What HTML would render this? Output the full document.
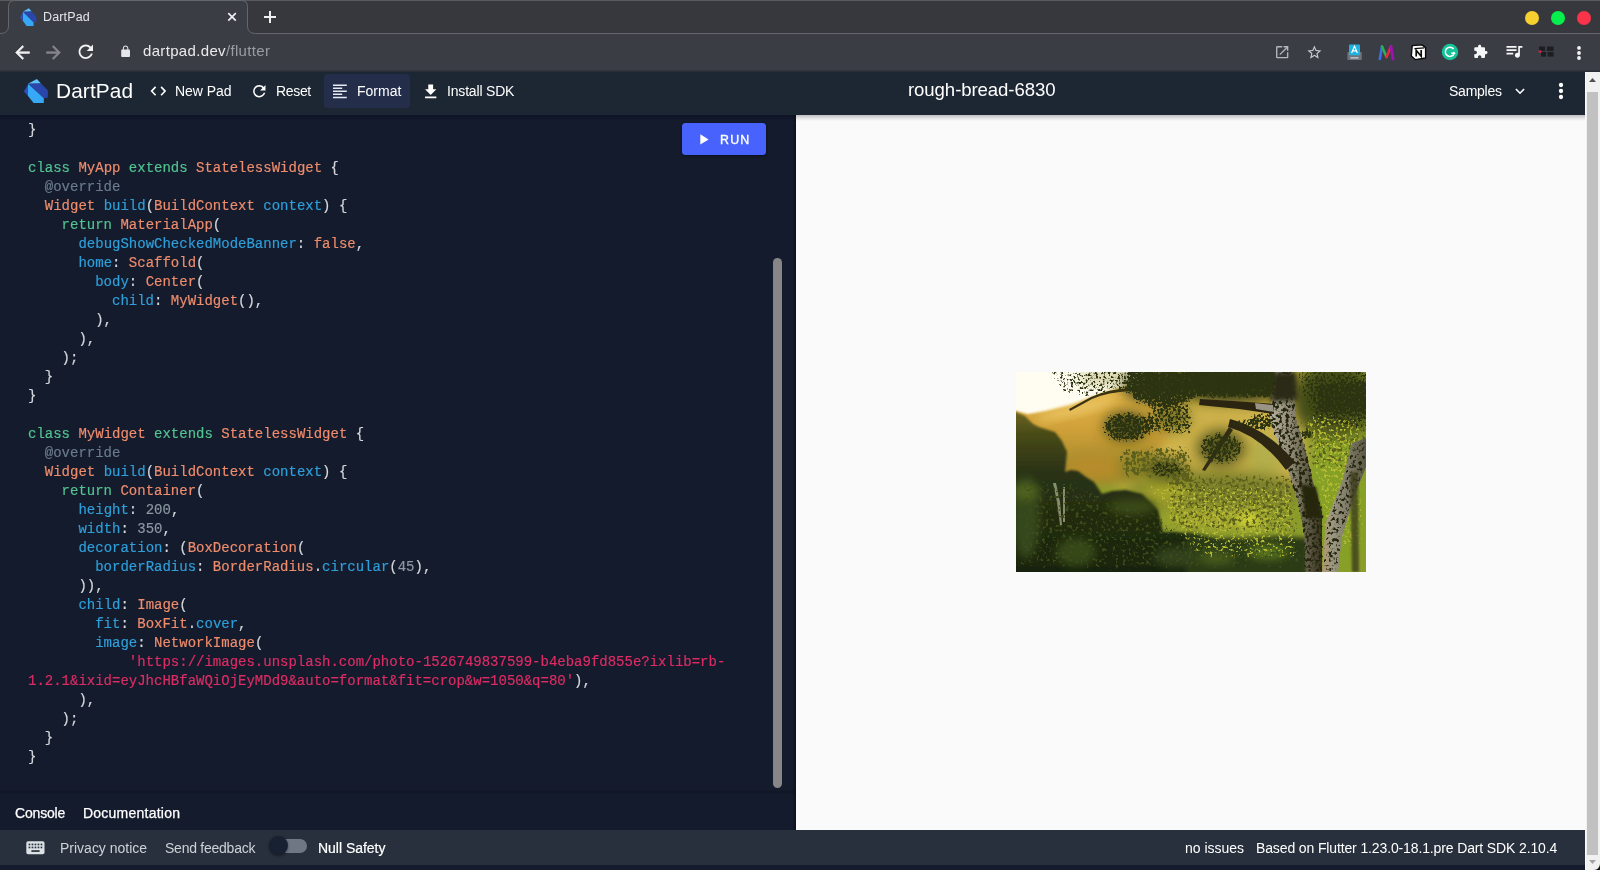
<!DOCTYPE html>
<html lang="en">
<head>
<meta charset="utf-8">
<title>DartPad</title>
<style>
*{box-sizing:border-box;margin:0;padding:0}
html,body{width:1600px;height:870px;overflow:hidden;background:#141b2d}
body{position:relative;font-family:"Liberation Sans",sans-serif;color:#fff}
.abs{position:absolute}
svg{position:absolute;overflow:visible}
.tx{position:absolute;white-space:nowrap;line-height:1;transform-origin:0 0;will-change:transform}
/* browser chrome */
#tabstrip{left:0;top:0;width:1600px;height:34px;background:#36383d}
#topline{left:0;top:0;width:1600px;height:1px;background:#4c4e53}
#tab{left:8px;top:3px;width:239px;height:31px;background:#3b3d44;border-radius:9px 9px 0 0}
#sep{left:0;top:33px;width:1600px;height:1px;background:#595b60}
#toolbar{left:0;top:34px;width:1600px;height:38px;background:#3b3d44}
#tbline{left:0;top:70px;width:1600px;height:2px;background:linear-gradient(#34363c,#282c36)}
/* dartpad header */
#hdr{left:0;top:72px;width:1585px;height:43px;background:#1d2733}
#hdrshadow{left:0;top:115px;width:1585px;height:6px;background:linear-gradient(rgba(0,0,20,.24),rgba(0,0,20,.1) 50%,rgba(0,0,0,0))}
#fmt{left:324px;top:74px;width:86px;height:34px;background:#242e4b;border-radius:4px}
/* editor */
#editor{left:0;top:115px;width:796px;height:715px;background:#141b2d}
#code{will-change:transform;left:28px;top:120.9px;-webkit-text-stroke:.18px;font-family:"Liberation Mono",monospace;font-size:14px;color:#d3d8db}
#code .ln{height:19px;line-height:19px;white-space:pre}
#code i{font-style:normal}
.k{color:#52c390}.t{color:#ee8c6c}.p{color:#2e9fd9}.a{color:#6a7b8b}.n{color:#8c98a2}.s{color:#dd2c64}
#run{left:682px;top:123px;width:84px;height:32px;background:#4863fd;border-radius:3.5px;box-shadow:0 1px 3px rgba(0,0,20,.55)}
#vsb{left:773px;top:257.7px;width:9.2px;height:530px;background:#868686;border-radius:4.6px}
#edge{left:792px;top:115px;width:4px;height:715px;background:linear-gradient(90deg,rgba(0,0,0,0),rgba(0,0,0,.35))}
#tabsplit{left:0;top:789px;width:796px;height:6px;background:linear-gradient(rgba(0,0,0,.0),rgba(0,0,0,.18) 50%,rgba(0,0,0,0))}
/* preview */
#preview{left:796px;top:115px;width:789px;height:715px;background:#fafafa}
#pshadow{left:796px;top:115px;width:789px;height:6px;background:linear-gradient(rgba(0,0,0,.26),rgba(0,0,0,0))}
/* footer */
#footer{left:0;top:830px;width:1585px;height:35px;background:#27303c}
#below{left:0;top:865px;width:1585px;height:5px;background:#141b2d}
/* page scrollbar */
#sb{left:1585px;top:72px;width:15px;height:798px;background:#f1f1f1;border-left:1px solid #fafafa}
#sbthumb{left:1587px;top:92px;width:11px;height:763px;background:#c1c1c1}
</style>
</head>
<body>
<div class="abs" id="tabstrip"></div>
<div class="abs" id="toolbar"></div>
<svg width="1600" height="36" style="left:0;top:0" viewBox="0 0 1600 36">
<rect x="0" y="0" width="1600" height="1" fill="#585a60"/>
<path d="M0,33.5 Q8.5,33.5 8.5,26 L8.5,6.5 Q8.5,0.5 14.5,0.5 L241.5,0.5 Q247.5,0.5 247.5,6.5 L247.5,26 Q247.5,33.5 255.5,33.5 L1600,33.5 L1600,36 L0,36Z" fill="#3b3d44"/>
<path d="M0,33.5 Q8.5,33.5 8.5,26 L8.5,6.5 Q8.5,0.5 14.5,0.5 L241.5,0.5 Q247.5,0.5 247.5,6.5 L247.5,26 Q247.5,33.5 255.5,33.5 L1600,33.5" fill="none" stroke="#65676d" stroke-width="1"/>
<!-- favicon -->
<g transform="translate(16,4.5) scale(0.68,0.74)">
<polygon points="10,9.8 18.9,4.9 23,9.4" fill="#5cc0fb"/>
<polygon points="10,9.8 23,9.4 29.9,16.4 29.9,23.4 25.8,24.2" fill="#2b46aa"/>
<polygon points="10,9.8 25.8,24.2 25.8,28.9 15.6,28.9 10,21.9" fill="#37a8f7"/>
<polygon points="10,10.5 5.9,17.4 10,21.9" fill="#2d4fc0"/>
</g>
<!-- close / new tab -->
<path d="M228.3,13.2 L235.8,20.7 M235.8,13.2 L228.3,20.7" stroke="#eef0f2" stroke-width="1.7" fill="none"/>
<path d="M264,17 L276,17 M270,11 L270,23" stroke="#eef0f2" stroke-width="2" fill="none"/>
</svg>
<div class="abs" id="tbline"></div>
<span class="tx" id="t-tab" style="left:43.2px;top:10.65px;letter-spacing:0.149px;font-size:12.5px;color:#e4e6e9">DartPad</span>
<span class="tx" id="t-url" style="left:142.5px;top:43.25px;letter-spacing:0.333px;font-size:15px;color:#e8eaed">dartpad.dev<span style="color:#9a9da3">/flutter</span></span>
<!-- window controls -->
<div class="abs" style="left:1525px;top:11px;width:14px;height:14px;border-radius:50%;background:#f5d02f"></div>
<div class="abs" style="left:1551px;top:11px;width:14px;height:14px;border-radius:50%;background:#06ef4c"></div>
<div class="abs" style="left:1577px;top:11px;width:14px;height:14px;border-radius:50%;background:#f9334a"></div>
<!-- nav icons -->
<svg width="21" height="21" viewBox="0 0 24 24" style="left:11.5px;top:41.5px"><path d="M20 11H7.83l5.59-5.59L12 4l-8 8 8 8 1.41-1.41L7.83 13H20v-2z" fill="#f1f3f4" stroke="#f1f3f4" stroke-width=".6"/></svg>
<svg width="21" height="21" viewBox="0 0 24 24" style="left:43.4px;top:41.5px"><path d="M12 4l-1.41 1.41L16.17 11H4v2h12.17l-5.58 5.59L12 20l8-8z" fill="#85878c" stroke="#85878c" stroke-width=".6"/></svg>
<svg width="21.6" height="21.6" viewBox="0 0 24 24" style="left:75.2px;top:41.2px"><path d="M17.65 6.35C16.2 4.9 14.21 4 12 4c-4.42 0-7.99 3.58-7.99 8s3.57 8 7.99 8c3.73 0 6.84-2.55 7.73-6h-2.08c-.82 2.33-3.04 4-5.65 4-3.31 0-6-2.69-6-6s2.69-6 6-6c1.66 0 3.14.69 4.22 1.78L13 11h7V4l-2.35 2.35z" fill="#f1f3f4"/></svg>
<svg width="13.2" height="13.2" viewBox="0 0 24 24" style="left:119.3px;top:45.2px"><path d="M18 8h-1V6c0-2.76-2.24-5-5-5S7 3.24 7 6v2H6c-1.1 0-2 .9-2 2v10c0 1.1.9 2 2 2h12c1.1 0 2-.9 2-2V10c0-1.1-.9-2-2-2zm-2.9 0H8.9V6c0-1.71 1.39-3.1 3.1-3.1 1.71 0 3.1 1.39 3.1 3.1v2z" fill="#e4e6e9"/></svg>
<!-- right toolbar icons -->
<svg width="16.4" height="16.4" viewBox="0 0 24 24" style="left:1273.9px;top:44.1px"><path d="M19 19H5V5h7V3H5c-1.11 0-2 .9-2 2v14c0 1.1.89 2 2 2h14c1.1 0 2-.9 2-2v-7h-2v7zM14 3v2h3.59l-9.83 9.83 1.41 1.41L19 6.41V10h2V3h-7z" fill="#b4b7bc"/></svg>
<svg width="16.8" height="16.8" viewBox="0 0 24 24" style="left:1305.6px;top:44.2px"><path d="M22 9.24l-7.19-.62L12 2 9.19 8.63 2 9.24l5.46 4.73L5.82 21 12 17.27 18.18 21l-1.63-7.03L22 9.24zM12 15.4l-3.76 2.27 1-4.28-3.32-2.88 4.38-.38L12 6.1l1.71 4.04 4.38.38-3.32 2.88 1 4.28L12 15.4z" fill="#c9ccd1"/></svg>
<svg width="16" height="17" viewBox="0 0 16 17" style="left:1346.5px;top:43.5px">
<rect x="0.4" y="8" width="14.4" height="8" rx="1" fill="#6f747c"/>
<rect x="2" y="0.6" width="11" height="10.6" rx="1" fill="#1fb2e0"/>
<path d="M4.6,9 L7.5,2.2 L10.4,9 M5.6,6.8 L9.4,6.8" stroke="#fff" stroke-width="1.2" fill="none"/>
<rect x="3.5" y="13" width="8" height="1.6" fill="#b9bdc3"/>
</svg>
<svg width="18" height="16" viewBox="0 0 18 16" style="left:1377.5px;top:44.5px">
<path d="M1.8,14 L4,1.5" stroke="#3b6fe8" stroke-width="2.6" fill="none" stroke-linecap="round"/>
<path d="M4,1.5 L8.6,12" stroke="#2ab052" stroke-width="2.6" fill="none" stroke-linecap="round"/>
<path d="M8.6,12 L13,1.5" stroke="#e8283a" stroke-width="2.6" fill="none" stroke-linecap="round"/>
<path d="M13,1.5 L15,14" stroke="#a111b2" stroke-width="2.8" fill="none" stroke-linecap="round"/>
</svg>
<svg width="17" height="17" viewBox="0 0 17 17" style="left:1409.8px;top:43.6px">
<path d="M2.2,1.6 L12,0.9 L15.6,3.6 L15.6,14 L5.2,15.6 L1.3,12 Z" fill="#fff" stroke="#0b0b0c" stroke-width="1.4" stroke-linejoin="round"/>
<path d="M4.4,4.6 L14.4,3.9" stroke="#0b0b0c" stroke-width="1.2"/>
<path d="M6.2,12.6 L6.2,6.4 L11.2,12.2 L11.2,6" stroke="#0b0b0c" stroke-width="1.7" fill="none"/>
</svg>
<svg width="18" height="18" viewBox="0 0 18 18" style="left:1441px;top:43px">
<circle cx="9" cy="9" r="8.2" fill="#15c39a"/>
<path d="M12.6,6 A4.6,4.6 0 1 0 13.3,10.2 L10.2,10.2" stroke="#fff" stroke-width="1.5" fill="none"/>
<path d="M12.2,8.6 L14.6,10.2 L12.2,11.8Z" fill="#fff"/>
</svg>
<svg width="15.2" height="15.2" viewBox="0 0 24 24" style="left:1472.9px;top:43.8px"><path d="M20.5 11H19V7c0-1.1-.9-2-2-2h-4V3.5C13 2.12 11.88 1 10.5 1S8 2.12 8 3.5V5H4c-1.1 0-1.99.9-1.99 2v3.8H3.5c1.49 0 2.7 1.21 2.7 2.7s-1.21 2.7-2.7 2.7H2V20c0 1.1.9 2 2 2h3.8v-1.5c0-1.49 1.21-2.7 2.7-2.7 1.49 0 2.7 1.21 2.7 2.7V22H17c1.1 0 2-.9 2-2v-4h1.5c1.38 0 2.5-1.12 2.5-2.5S21.88 11 20.5 11z" fill="#f6f7f8"/></svg>
<svg width="20.1" height="20.1" viewBox="0 0 24 24" style="left:1503.5px;top:40.9px"><path d="M15 6H3v2h12V6zm0 4H3v2h12v-2zM3 16h8v-2H3v2zM17 6v8.18c-.31-.11-.65-.18-1-.18-1.66 0-3 1.34-3 3s1.34 3 3 3 3-1.34 3-3V8h3V6h-5z" fill="#f6f7f8"/></svg>
<svg width="17" height="12" viewBox="0 0 17 12" style="left:1537.5px;top:45.5px">
<rect x="1" y="0.5" width="6" height="4.4" fill="#1d1e22"/><rect x="9" y="0.5" width="6.6" height="4.4" fill="#1d1e22"/>
<rect x="3" y="6" width="5" height="4.6" fill="#1d1e22"/><rect x="9.6" y="6" width="6" height="4.6" fill="#1d1e22"/>
<circle cx="2" cy="5.6" r="1.5" fill="#d0204a"/>
</svg>
<svg width="6" height="16" viewBox="0 0 6 16" style="left:1575.6px;top:44.5px"><circle cx="3" cy="2.9" r="1.9" fill="#f1f3f4"/><circle cx="3" cy="8" r="1.9" fill="#f1f3f4"/><circle cx="3" cy="13" r="1.9" fill="#f1f3f4"/></svg>
<div class="abs" id="hdr"></div>
<div class="abs" id="fmt"></div>
<!-- dart logo -->
<svg width="40" height="34" viewBox="0 0 40 34" style="left:18px;top:74px">
<polygon points="10,9.8 18.9,4.9 23,9.4" fill="#5cc0fb"/>
<polygon points="10,9.8 23,9.4 29.9,16.4 29.9,23.4 25.8,24.2" fill="#2b46aa"/>
<polygon points="10,9.8 25.8,24.2 25.8,28.9 15.6,28.9 10,21.9" fill="#37a8f7"/>
<polygon points="10,10.5 5.9,17.4 10,21.9" fill="#2d4fc0"/>
</svg>
<span class="tx" id="t-logo" style="left:56px;top:80.8px;letter-spacing:0.129px;font-size:20.8px">DartPad</span>
<!-- code icon -->
<svg width="18" height="12" viewBox="0 0 18 12" style="left:150px;top:85px"><path d="M5.6,1.9 L1.6,6.1 L5.6,10.3 M11.1,1.9 L15.1,6.1 L11.1,10.3" stroke="#fff" stroke-width="1.6" fill="none"/></svg>
<span class="tx" id="t-newpad" style="left:174.5px;top:83.8px;letter-spacing:-0.037px;font-size:14px">New Pad</span>
<!-- refresh -->
<svg width="18.6" height="18.6" viewBox="0 0 24 24" style="left:250.4px;top:81.6px"><path d="M17.65 6.35C16.2 4.9 14.21 4 12 4c-4.42 0-7.99 3.58-7.99 8s3.57 8 7.99 8c3.73 0 6.84-2.55 7.73-6h-2.08c-.82 2.33-3.04 4-5.65 4-3.31 0-6-2.69-6-6s2.69-6 6-6c1.66 0 3.14.69 4.22 1.78L13 11h7V4l-2.35 2.35z" fill="#fff"/></svg>
<span class="tx" id="t-reset" style="left:275.9px;top:83.7px;letter-spacing:-0.333px;font-size:14px">Reset</span>
<!-- format align left -->
<svg width="14" height="15" viewBox="0 0 14 15" style="left:333px;top:83.8px"><path d="M0,1.2 H13.8 M0,4.25 H9.2 M0,7.3 H13.8 M0,10.35 H9.2 M0,13.4 H13.8" stroke="#e6e9f2" stroke-width="1.5" fill="none"/></svg>
<span class="tx" id="t-format" style="left:356.75px;top:83.7px;letter-spacing:0.01px;font-size:14px">Format</span>
<!-- download -->
<svg width="19.4" height="19.4" viewBox="0 0 24 24" style="left:420.6px;top:82.2px"><path d="M19 9h-4V3H9v6H5l7 7 7-7zM5 18v2h14v-2H5z" fill="#fff"/></svg>
<span class="tx" id="t-sdk" style="left:446.6px;top:83.7px;letter-spacing:-0.181px;font-size:14px">Install SDK</span>
<span class="tx" id="t-title" style="left:907.75px;top:81px;letter-spacing:-0.085px;font-size:18.6px">rough-bread-6830</span>
<span class="tx" id="t-samples" style="left:1449.2px;top:83.8px;letter-spacing:-0.245px;font-size:14px">Samples</span>
<svg width="10" height="7" viewBox="0 0 10 7" style="left:1515px;top:88px"><path d="M0.9,1 L5,5.2 L9.1,1" stroke="#fff" stroke-width="1.6" fill="none"/></svg>
<svg width="6" height="18" viewBox="0 0 6 18" style="left:1558px;top:82px"><circle cx="3" cy="3" r="2.15" fill="#fff"/><circle cx="3" cy="9" r="2.15" fill="#fff"/><circle cx="3" cy="15" r="2.15" fill="#fff"/></svg>
<div class="abs" id="editor"></div>
<div class="abs" id="edge"></div>
<div class="abs" id="code">
<div class="ln">}</div>
<div class="ln">&nbsp;</div>
<div class="ln"><i class="k">class</i> <i class="t">MyApp</i> <i class="k">extends</i> <i class="t">StatelessWidget</i> {</div>
<div class="ln">  <i class="a">@override</i></div>
<div class="ln">  <i class="t">Widget</i> <i class="p">build</i>(<i class="t">BuildContext</i> <i class="p">context</i>) {</div>
<div class="ln">    <i class="k">return</i> <i class="t">MaterialApp</i>(</div>
<div class="ln">      <i class="p">debugShowCheckedModeBanner</i>: <i class="t">false</i>,</div>
<div class="ln">      <i class="p">home</i>: <i class="t">Scaffold</i>(</div>
<div class="ln">        <i class="p">body</i>: <i class="t">Center</i>(</div>
<div class="ln">          <i class="p">child</i>: <i class="t">MyWidget</i>(),</div>
<div class="ln">        ),</div>
<div class="ln">      ),</div>
<div class="ln">    );</div>
<div class="ln">  }</div>
<div class="ln">}</div>
<div class="ln">&nbsp;</div>
<div class="ln"><i class="k">class</i> <i class="t">MyWidget</i> <i class="k">extends</i> <i class="t">StatelessWidget</i> {</div>
<div class="ln">  <i class="a">@override</i></div>
<div class="ln">  <i class="t">Widget</i> <i class="p">build</i>(<i class="t">BuildContext</i> <i class="p">context</i>) {</div>
<div class="ln">    <i class="k">return</i> <i class="t">Container</i>(</div>
<div class="ln">      <i class="p">height</i>: <i class="n">200</i>,</div>
<div class="ln">      <i class="p">width</i>: <i class="n">350</i>,</div>
<div class="ln">      <i class="p">decoration</i>: (<i class="t">BoxDecoration</i>(</div>
<div class="ln">        <i class="p">borderRadius</i>: <i class="t">BorderRadius</i>.<i class="p">circular</i>(<i class="n">45</i>),</div>
<div class="ln">      )),</div>
<div class="ln">      <i class="p">child</i>: <i class="t">Image</i>(</div>
<div class="ln">        <i class="p">fit</i>: <i class="t">BoxFit</i>.<i class="p">cover</i>,</div>
<div class="ln">        <i class="p">image</i>: <i class="t">NetworkImage</i>(</div>
<div class="ln">            <i class="s">'https://images.unsplash.com/photo-1526749837599-b4eba9fd855e?ixlib=rb-</i></div>
<div class="ln"><i class="s">1.2.1&amp;ixid=eyJhcHBfaWQiOjEyMDd9&amp;auto=format&amp;fit=crop&amp;w=1050&amp;q=80'</i>),</div>
<div class="ln">      ),</div>
<div class="ln">    );</div>
<div class="ln">  }</div>
<div class="ln">}</div>
</div>
<div class="abs" id="run"></div>
<svg width="9" height="11" viewBox="0 0 9 11" style="left:699.6px;top:134px"><path d="M0.3,0.3 L8.6,5.4 L0.3,10.5Z" fill="#fff"/></svg>
<span class="tx" id="t-run" style="left:719.75px;top:133.8px;letter-spacing:1.177px;font-size:12.4px;-webkit-text-stroke:.35px">RUN</span>
<div class="abs" id="vsb"></div>
<div class="abs" id="tabsplit"></div>
<span class="tx" id="t-console" style="left:14.75px;top:805.75px;letter-spacing:-0.18px;font-size:14px;-webkit-text-stroke:.25px">Console</span>
<span class="tx" id="t-docs" style="left:83.4px;top:805.75px;letter-spacing:0.235px;font-size:14px;-webkit-text-stroke:.25px">Documentation</span>
<div class="abs" id="preview"></div>

<div class="abs" id="hdrshadow"></div>
<svg id="photo" style="left:1016px;top:372px;overflow:hidden" width="350" height="200" viewBox="0 0 350 200">
<defs>
<linearGradient id="gHill" x1="0" y1="0" x2="0" y2="1"><stop offset="0" stop-color="#f0cc66"/><stop offset=".3" stop-color="#e0b046"/><stop offset=".55" stop-color="#cf9f38"/><stop offset="1" stop-color="#8a8428"/></linearGradient>
<linearGradient id="gCliff" x1="0" y1="0" x2="0" y2="1"><stop offset="0" stop-color="#6e6622"/><stop offset=".15" stop-color="#484a18"/><stop offset=".38" stop-color="#2a3213"/><stop offset="1" stop-color="#18230e"/></linearGradient>
<linearGradient id="gTrunk" x1="0" y1="0" x2="1" y2="0"><stop offset="0" stop-color="#b9b4a0"/><stop offset=".45" stop-color="#8a846e"/><stop offset="1" stop-color="#37331f"/></linearGradient>
<linearGradient id="gTrunk2" x1="0" y1="0" x2="1" y2="0"><stop offset="0" stop-color="#b09a6c"/><stop offset=".25" stop-color="#9a9682"/><stop offset="1" stop-color="#5b5844"/></linearGradient>
<filter id="b1" x="-20%" y="-20%" width="140%" height="140%"><feGaussianBlur stdDeviation="1"/></filter>
<filter id="b2" x="-30%" y="-30%" width="160%" height="160%"><feGaussianBlur stdDeviation="2.5"/></filter>
<filter id="b4" x="-40%" y="-40%" width="180%" height="180%"><feGaussianBlur stdDeviation="4"/></filter>
<filter id="b7" x="-50%" y="-50%" width="200%" height="200%"><feGaussianBlur stdDeviation="7"/></filter>
<filter id="fDark" x="0" y="0" width="350" height="200" filterUnits="userSpaceOnUse" color-interpolation-filters="sRGB">
<feGaussianBlur in="SourceAlpha" stdDeviation="3" result="a"/>
<feTurbulence type="fractalNoise" baseFrequency="0.4" numOctaves="2" seed="4" result="n"/>
<feColorMatrix in="n" type="matrix" values="0 0 0 0 0  0 0 0 0 0  0 0 0 0 0  1 0 0 0 0" result="na"/>
<feComposite in="a" in2="na" operator="arithmetic" k1="0" k2="0.5" k3="0.5" k4="0" result="s"/>
<feColorMatrix in="s" type="matrix" values="0 0 0 0 0.173  0 0 0 0 0.200  0 0 0 0 0.063  0 0 0 14 -8.400"/>
</filter>
<filter id="fDark2" x="0" y="0" width="350" height="200" filterUnits="userSpaceOnUse" color-interpolation-filters="sRGB">
<feGaussianBlur in="SourceAlpha" stdDeviation="1.2" result="a"/>
<feTurbulence type="fractalNoise" baseFrequency="0.3" numOctaves="2" seed="9" result="n"/>
<feColorMatrix in="n" type="matrix" values="0 0 0 0 0  0 0 0 0 0  0 0 0 0 0  1 0 0 0 0" result="na"/>
<feComposite in="a" in2="na" operator="arithmetic" k1="0" k2="0.5" k3="0.5" k4="0" result="s"/>
<feColorMatrix in="s" type="matrix" values="0 0 0 0 0.141  0 0 0 0 0.145  0 0 0 0 0.059  0 0 0 14 -8.540"/>
</filter>
<filter id="fMid" x="0" y="0" width="350" height="200" filterUnits="userSpaceOnUse" color-interpolation-filters="sRGB">
<feGaussianBlur in="SourceAlpha" stdDeviation="4" result="a"/>
<feTurbulence type="fractalNoise" baseFrequency="0.3" numOctaves="2" seed="17" result="n"/>
<feColorMatrix in="n" type="matrix" values="0 0 0 0 0  0 0 0 0 0  0 0 0 0 0  1 0 0 0 0" result="na"/>
<feComposite in="a" in2="na" operator="arithmetic" k1="0" k2="0.5" k3="0.5" k4="0" result="s"/>
<feColorMatrix in="s" type="matrix" values="0 0 0 0 0.361  0 0 0 0 0.376  0 0 0 0 0.110  0 0 0 14 -8.400"/>
</filter>
<filter id="fBright" x="0" y="0" width="350" height="200" filterUnits="userSpaceOnUse" color-interpolation-filters="sRGB">
<feGaussianBlur in="SourceAlpha" stdDeviation="4" result="a"/>
<feTurbulence type="fractalNoise" baseFrequency="0.35" numOctaves="2" seed="23" result="n"/>
<feColorMatrix in="n" type="matrix" values="0 0 0 0 0  0 0 0 0 0  0 0 0 0 0  1 0 0 0 0" result="na"/>
<feComposite in="a" in2="na" operator="arithmetic" k1="0" k2="0.5" k3="0.5" k4="0" result="s"/>
<feColorMatrix in="s" type="matrix" values="0 0 0 0 0.725  0 0 0 0 0.741  0 0 0 0 0.204  0 0 0 14 -8.680"/>
</filter>
<filter id="fGreen" x="0" y="0" width="350" height="200" filterUnits="userSpaceOnUse" color-interpolation-filters="sRGB">
<feGaussianBlur in="SourceAlpha" stdDeviation="4" result="a"/>
<feTurbulence type="fractalNoise" baseFrequency="0.3" numOctaves="2" seed="31" result="n"/>
<feColorMatrix in="n" type="matrix" values="0 0 0 0 0  0 0 0 0 0  0 0 0 0 0  1 0 0 0 0" result="na"/>
<feComposite in="a" in2="na" operator="arithmetic" k1="0" k2="0.5" k3="0.5" k4="0" result="s"/>
<feColorMatrix in="s" type="matrix" values="0 0 0 0 0.235  0 0 0 0 0.298  0 0 0 0 0.102  0 0 0 14 -8.400"/>
</filter>
</defs>

<rect width="350" height="200" fill="#8c9c2c"/>
<!-- haze behind tree -->
<rect x="100" y="-5" width="190" height="120" fill="#ceb24c" filter="url(#b7)"/>
<!-- hill -->
<path d="M-5,30 L150,-5 L164,30 L154,60 L140,85 L120,108 L60,112 L-5,110Z" fill="url(#gHill)" filter="url(#b4)"/>
<ellipse cx="80" cy="96" rx="34" ry="14" fill="#b78c2c" filter="url(#b7)"/>
<!-- sky -->
<path d="M-5,-5 L140,-5 L118,11 L92,19 L75,25 L55,33 L30,39 L12,42 L-5,38Z" fill="#fffdf2" filter="url(#b1)"/>
<ellipse cx="60" cy="38" rx="40" ry="5" fill="#f0cf70" opacity=".7" filter="url(#b4)" transform="rotate(-14 60 38)"/>
<g id="bgblobs">
<ellipse cx="124" cy="96" rx="22" ry="13" fill="#8a8228" filter="url(#b7)"/>
<ellipse cx="250" cy="85" rx="18" ry="22" fill="#b4ae4c" filter="url(#b7)"/>
<ellipse cx="200" cy="120" rx="85" ry="22" fill="#7e822a" filter="url(#b7)"/>
<ellipse cx="200" cy="146" rx="55" ry="10" fill="#a8aa2e" filter="url(#b7)"/>
<ellipse cx="150" cy="120" rx="24" ry="12" fill="#a6a42c" filter="url(#b7)"/>
<ellipse cx="232" cy="148" rx="11" ry="7" fill="#d8d836" filter="url(#b4)"/>
<ellipse cx="325" cy="130" rx="34" ry="70" fill="#86a028" filter="url(#b7)"/>
<ellipse cx="318" cy="28" rx="42" ry="38" fill="#434c16" filter="url(#b7)"/>
<ellipse cx="215" cy="10" rx="62" ry="20" fill="#2e340f" filter="url(#b7)"/>
<ellipse cx="140" cy="12" rx="35" ry="18" fill="#3a4013" filter="url(#b7)"/>
<ellipse cx="110" cy="54" rx="22" ry="14" fill="#444816" filter="url(#b7)"/>
<ellipse cx="150" cy="97" rx="20" ry="10" fill="#4e5216" filter="url(#b7)"/>
<ellipse cx="205" cy="76" rx="24" ry="18" fill="#55561a" filter="url(#b7)"/>
<ellipse cx="155" cy="46" rx="20" ry="13" fill="#7a7424" filter="url(#b7)"/>
<ellipse cx="90" cy="6" rx="30" ry="6" fill="#c9c48c" filter="url(#b7)"/>
</g>
<!-- left cliff + bottom forest -->
<path d="M-5,38 L9,44 L17,52 L23,55 L39,60 L46,69 L51,80 L49,100 L55,98 L62,99 L70,105 L78,110 L86,122 L96,119 L110,118 L126,122 L142,138 L147,160 L160,160 L175,162 L200,168 L218,170 L224,184 L232,205 L-5,205Z" fill="url(#gCliff)" filter="url(#b1)"/>
<path d="M170,160 L200,166 L230,166 L262,164 L292,166 L292,205 L170,205Z" fill="#2b3a16" filter="url(#b2)"/>
<ellipse cx="10" cy="145" rx="14" ry="42" fill="#35461a" filter="url(#b4)"/>
<ellipse cx="10" cy="120" rx="13" ry="9" fill="#50621e" filter="url(#b4)"/>
<ellipse cx="60" cy="180" rx="20" ry="14" fill="#364719" filter="url(#b4)"/>
<ellipse cx="116" cy="135" rx="24" ry="8" fill="#3a4a18" filter="url(#b4)"/>
<ellipse cx="160" cy="185" rx="22" ry="10" fill="#32431a" filter="url(#b4)"/>
<ellipse cx="252" cy="180" rx="20" ry="7" fill="#5a761f" filter="url(#b4)"/><ellipse cx="200" cy="186" rx="18" ry="6" fill="#4a5e1c" filter="url(#b4)"/>
<path d="M37,111 L41,130 L44,153 L46,153 L44,130 L40,111Z M47,115 L47,150 L49,150 L49,115Z" fill="#8a8f70"/>
<!-- background foliage (behind trunk) -->
<g filter="url(#fMid)"><path d="M100,74 L178,72 L178,108 L104,108Z" fill-opacity=".78"/><path d="M280,40 L355,40 L355,100 L295,100Z" fill-opacity=".7"/><path d="M150,100 L280,100 L285,165 L150,160Z" fill-opacity=".71"/></g>
<g filter="url(#fBright)"><path d="M285,40 L350,40 L350,180 L310,180 L296,100Z" fill-opacity=".7"/><path d="M125,108 L280,112 L285,190 L180,190 L150,150Z" fill-opacity=".68"/></g>
<g filter="url(#fGreen)"><path d="M0,105 L60,105 L100,125 L150,140 L175,165 L290,170 L290,200 L0,200Z" fill-opacity=".64"/></g>
<!-- trunks and branches -->
<path d="M260,-2 L276,-2 L280,46 L290,80 L297,110 L306,140 L306,200 L290,200 L288,160 L281,125 L271,95 L253,46Z" fill="url(#gTrunk)"/>
<g filter="url(#fDark2)"><path d="M258,-2 L278,-2 L282,46 L292,80 L299,110 L308,140 L308,200 L288,200 L286,160 L279,125 L269,95 L251,46Z" fill-opacity=".74"/></g>
<path d="M285,112 L300,115 L306,146 L290,146Z" fill="#26280f" filter="url(#b1)"/>
<path d="M256,0 L280,0 L282,28 L254,30Z" fill="#2a2c12" filter="url(#b2)"/>
<path d="M350,66 L336,71 L326,110 L310,150 L306,200 L322,200 L326,165 L340,120 L350,95Z" fill="url(#gTrunk2)"/>
<g filter="url(#fDark2)"><path d="M350,66 L336,71 L326,110 L310,150 L306,200 L322,200 L326,165 L340,120 L350,95Z" fill-opacity=".7"/></g>
<path d="M334,100 L342,100 L343,200 L336,200Z" fill="#3c3c1a" opacity=".8" filter="url(#b1)"/>
<path d="M258,32 Q220,29 184,27 L183,33 Q220,36 258,42Z" fill="#2a2410"/>
<path d="M239,31 L257,33 L258,40 L240,37Z" fill="#9a9484"/>
<path d="M279,90 Q250,56 214,47 L212,55 Q245,64 270,98Z" fill="#2c2612"/>
<path d="M213,55 L186,98 L189,99 L217,58Z" fill="#332c14"/>
<path d="M175,14 Q140,17 115,16 Q92,17 75,25 L53,37 L54,39 L76,27 Q92,20 115,19 Q140,20 176,18Z" fill="#3a3312"/>
<!-- foliage -->
<g filter="url(#fDark)">
<path d="M112,-5 L262,-5 L258,28 L180,27 L150,36 L120,32 L110,18Z" fill-opacity=".95"/>
<ellipse cx="111" cy="55" rx="26" ry="17" fill-opacity=".86"/><ellipse cx="246" cy="50" rx="15" ry="11" fill-opacity=".86"/>
<path d="M280,-5 L355,-5 L355,60 L300,55 L282,20Z" fill-opacity=".72"/><path d="M300,12 L355,10 L355,42 L302,40Z" fill-opacity=".86"/>
<ellipse cx="291" cy="62" rx="9" ry="7" fill-opacity=".95"/>
<path d="M28,-5 L120,-5 L118,20 L70,27 L45,22Z" fill-opacity=".69"/>
<path d="M130,36 L178,30 L178,66 L135,62Z" fill-opacity=".76"/>
<ellipse cx="205" cy="76" rx="24" ry="18" fill-opacity=".8"/>
<ellipse cx="150" cy="97" rx="20" ry="10" fill-opacity=".8"/>
<ellipse cx="225" cy="52" rx="14" ry="6" fill-opacity=".8"/>
</g>

</svg>
<div class="abs" id="footer"></div>
<div class="abs" id="below"></div>
<!-- keyboard icon -->
<svg width="19" height="14" viewBox="0 0 19 14" style="left:25.5px;top:841px">
<rect x="0.3" y="0.3" width="18.2" height="13" rx="1.8" fill="#dde1e6"/>
<g fill="#27303c"><rect x="2.6" y="2.6" width="1.7" height="1.7"/><rect x="5.6" y="2.6" width="1.7" height="1.7"/><rect x="8.6" y="2.6" width="1.7" height="1.7"/><rect x="11.6" y="2.6" width="1.7" height="1.7"/><rect x="14.6" y="2.6" width="1.7" height="1.7"/>
<rect x="2.6" y="5.6" width="1.7" height="1.7"/><rect x="5.6" y="5.6" width="1.7" height="1.7"/><rect x="8.6" y="5.6" width="1.7" height="1.7"/><rect x="11.6" y="5.6" width="1.7" height="1.7"/><rect x="14.6" y="5.6" width="1.7" height="1.7"/>
<rect x="5.4" y="9.2" width="8.2" height="1.7"/></g>
</svg>
<span class="tx" id="t-privacy" style="left:59.6px;top:840.5px;letter-spacing:-0.004px;font-size:14px;color:#cdd2d7">Privacy notice</span>
<span class="tx" id="t-feedback" style="left:164.8px;top:840.5px;letter-spacing:-0.246px;font-size:14px;color:#cdd2d7">Send feedback</span>
<!-- toggle -->
<div class="abs" style="left:276px;top:839px;width:31px;height:13.6px;border-radius:7px;background:#6f7785"></div>
<div class="abs" style="left:269.2px;top:836.4px;width:19px;height:19px;border-radius:50%;background:#182131;box-shadow:0 1px 3px rgba(0,0,0,.45)"></div>
<span class="tx" id="t-null" style="left:317.75px;top:840.5px;letter-spacing:-0.025px;font-size:14px;-webkit-text-stroke:.2px">Null Safety</span>
<span class="tx" id="t-issues" style="left:1185.2px;top:840.5px;letter-spacing:-0.006px;font-size:14px">no issues</span>
<span class="tx" id="t-based" style="left:1255.6px;top:840.5px;letter-spacing:-0.13px;font-size:14px">Based on Flutter 1.23.0-18.1.pre Dart SDK 2.10.4</span>
<div class="abs" id="sb"></div>
<div class="abs" id="sbthumb"></div>
<svg width="15" height="20" viewBox="0 0 15 20" style="left:1585px;top:72px"><path d="M4,10 L7.5,6 L11,10Z" fill="#505050"/></svg>
<svg width="15" height="15" viewBox="0 0 15 15" style="left:1585px;top:855px"><path d="M4,5 L7.5,9 L11,5Z" fill="#a3a3a3"/></svg>
<svg width="8" height="8" viewBox="0 0 8 8" style="left:1592px;top:862px"><path d="M8,2 Q7.5,7.5 2,8 L8,8Z" fill="#111"/></svg>
</body>
</html>
